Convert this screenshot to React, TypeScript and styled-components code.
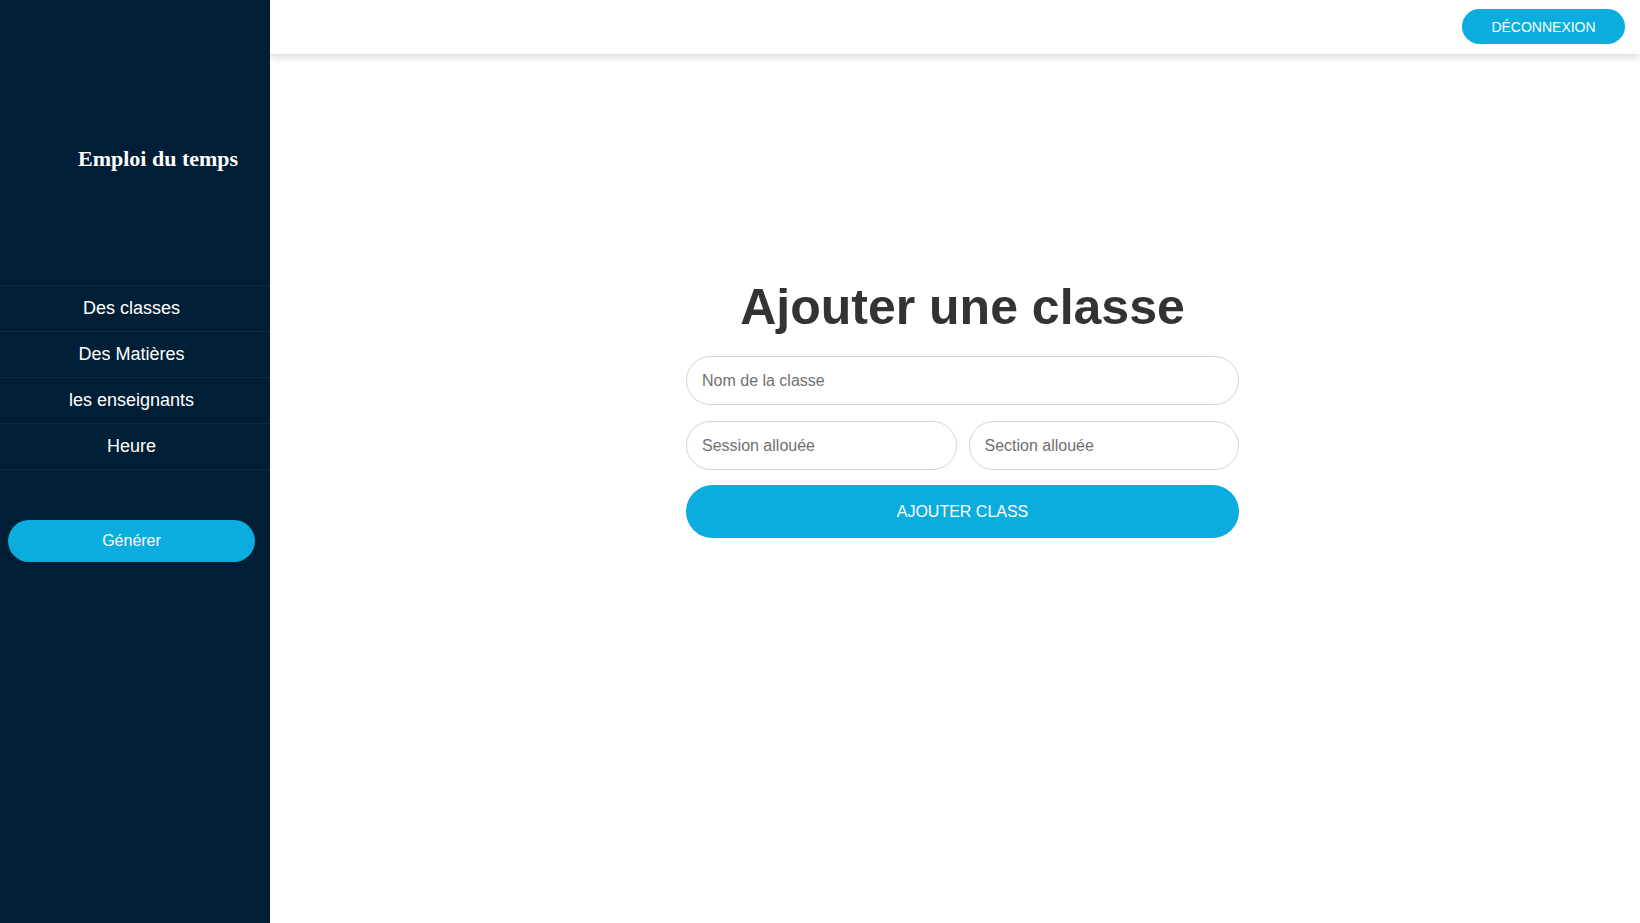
import React from "react";
import styled, { createGlobalStyle } from "styled-components";

const Global = createGlobalStyle`
  html, body { margin: 0; padding: 0; height: 100%; }
  body { font-family: "Liberation Sans", Arial, sans-serif; background: #fff; }
  * { box-sizing: border-box; }
`;

const Layout = styled.div`
  display: flex;
  width: 1640px;
  height: 923px;
  overflow: hidden;
`;

const Sidebar = styled.aside`
  width: 270px;
  flex: none;
  background: #001f36;
  display: flex;
  flex-direction: column;
`;

const Brand = styled.div`
  height: 285px;
  display: flex;
  align-items: flex-start;
  padding: 146px 0 0 78px;
  font-family: "Liberation Serif", "Times New Roman", serif;
  font-weight: bold;
  font-size: 22px;
  color: #fff;
`;

const NavList = styled.nav`
  display: flex;
  flex-direction: column;
  border-top: 1px solid #0b2d4a;
`;

const NavItem = styled.a`
  height: 46px;
  display: flex;
  align-items: center;
  justify-content: center;
  padding-right: 7px;
  color: #fff;
  font-size: 18px;
  text-decoration: none;
  border-bottom: 1px solid #0b2d4a;
`;

const GenerateButton = styled.button`
  margin: 50px 0 0 8px;
  width: 247px;
  height: 42px;
  border: none;
  border-radius: 21px;
  background: #0badde;
  color: #fff;
  font-family: "Liberation Sans", Arial, sans-serif;
  font-size: 16px;
`;

const Main = styled.div`
  flex: 1;
  display: flex;
  flex-direction: column;
`;

const Header = styled.header`
  height: 54px;
  flex: none;
  display: flex;
  align-items: flex-start;
  justify-content: flex-end;
  padding: 9px 15px 0 0;
  background: #fff;
  box-shadow: 0 3px 8px rgba(0, 0, 0, 0.16);
  position: relative;
  z-index: 1;
`;

const LogoutButton = styled.button`
  width: 163px;
  height: 35px;
  border: none;
  border-radius: 18px;
  background: #0badde;
  color: #fff;
  font-family: "Liberation Sans", Arial, sans-serif;
  font-size: 14px;
`;

const Content = styled.div`
  flex: 1;
  display: flex;
  justify-content: center;
  align-items: flex-start;
  padding: 225px 0 0 15px;
`;

const Form = styled.form`
  width: 553px;
  display: flex;
  flex-direction: column;
`;

const Title = styled.h1`
  margin: 0 0 20px;
  text-align: center;
  font-size: 50px;
  font-weight: bold;
  color: #333;
  line-height: 57px;
`;

const Row = styled.div<{ $gap?: number }>`
  display: flex;
  gap: 12px;
  margin-bottom: ${(p) => p.$gap ?? 16}px;
`;

const Input = styled.input`
  flex: 1;
  min-width: 0;
  height: 49px;
  border: 1px solid #d4d4d4;
  border-radius: 25px;
  padding: 0 15px;
  font-family: "Liberation Sans", Arial, sans-serif;
  font-size: 16px;
  color: #333;
  background: #fff;
  outline: none;
  &::placeholder { color: #707070; }
`;

const Submit = styled.button`
  height: 53px;
  border: none;
  border-radius: 27px;
  background: #0badde;
  color: #fff;
  font-family: "Liberation Sans", Arial, sans-serif;
  font-size: 16px;
`;

export default function App() {
  return (
    <>
      <Global />
      <Layout>
        <Sidebar>
          <Brand>Emploi du temps</Brand>
          <NavList>
            <NavItem>Des classes</NavItem>
            <NavItem>Des Matières</NavItem>
            <NavItem>les enseignants</NavItem>
            <NavItem>Heure</NavItem>
          </NavList>
          <GenerateButton type="button">Générer</GenerateButton>
        </Sidebar>
        <Main>
          <Header>
            <LogoutButton type="button">DÉCONNEXION</LogoutButton>
          </Header>
          <Content>
            <Form onSubmit={(e) => e.preventDefault()}>
              <Title>Ajouter une classe</Title>
              <Row>
                <Input placeholder="Nom de la classe" />
              </Row>
              <Row $gap={15}>
                <Input placeholder="Session allouée" />
                <Input placeholder="Section allouée" />
              </Row>
              <Submit type="submit">AJOUTER CLASS</Submit>
            </Form>
          </Content>
        </Main>
      </Layout>
    </>
  );
}
